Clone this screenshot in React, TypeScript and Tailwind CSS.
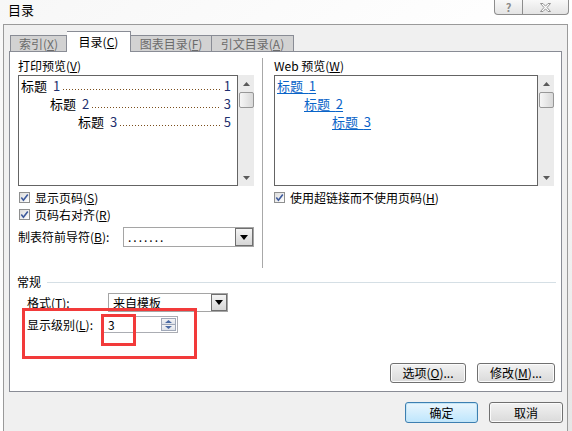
import React from "react";

const CheckBox: React.FC = () => (
  <span className="flex h-[11px] w-[11px] shrink-0 items-center justify-center border border-[#8e8f8f] bg-linear-to-br from-[#dcdcdc] to-[#ffffff]">
    <svg width="9" height="9" viewBox="0 0 9 9">
      <path d="M1.3 4.6 L3.4 7.2 L7.8 1.4" stroke="#3d5a9c" strokeWidth="1.6" fill="none" />
    </svg>
  </span>
);

const ScrollBar: React.FC = () => (
  <div className="flex w-[16px] shrink-0 flex-col items-center bg-[#ebebeb]">
    <div className="flex h-[17px] w-full items-center justify-center">
      <svg width="7" height="4" viewBox="0 0 7 4">
        <path d="M0 4 L3.5 0 L7 4Z" fill="#5a5a5a" />
      </svg>
    </div>
    <div className="h-[16px] w-[15px] rounded-[2px] border border-[#979797] bg-linear-to-r from-[#f6f6f6] to-[#d8d8d8]" />
    <div className="flex-1" />
    <div className="flex h-[17px] w-full items-center justify-center">
      <svg width="7" height="4" viewBox="0 0 7 4">
        <path d="M0 0 L3.5 4 L7 0Z" fill="#5a5a5a" />
      </svg>
    </div>
  </div>
);

const DropArrow: React.FC<{ className: string }> = ({ className }) => (
  <div
    className={`flex shrink-0 items-center justify-center border border-[#6f6f6f] bg-linear-to-b from-[#f4f4f4] to-[#d6d6d6] ${className}`}
  >
    <svg width="8" height="5" viewBox="0 0 8 5">
      <path d="M0 0 L8 0 L4 5Z" fill="#000" />
    </svg>
  </div>
);

const Button: React.FC<{ label: React.ReactNode; className: string; primary?: boolean }> = ({
  label,
  className,
  primary = false,
}) => (
  <div
    className={`flex items-center justify-center rounded-[3px] border text-[12px] leading-none ${
      primary
        ? "border-[#3c7fb1] bg-linear-to-b from-[#eaf6fd] to-[#bee6fd] shadow-[inset_0_0_0_1px_#c4e5f6]"
        : "border-[#707070] bg-linear-to-b from-[#f2f2f2] to-[#dadada] shadow-[inset_0_0_0_1px_#fbfbfb]"
    } ${className}`}
  >
    {label}
  </div>
);

const PrintRow: React.FC<{ level: number; pad: string }> = ({ level, pad }) => {
  const page = level === 1 ? "1" : level === 2 ? "3" : "5";
  return (
    <div className={`flex h-[18px] min-w-0 items-center pr-[6px] text-[13px] leading-none ${pad}`}>
      <span className="shrink-0 text-black">标题</span>
      <span className="ml-[6px] shrink-0 text-[#1e2f6e]">{level}</span>
      {/* dotted tab leader */}
      <span className="mx-[3px] mt-[9px] h-px min-w-0 flex-1 bg-[linear-gradient(to_right,#7a4e1c_1px,transparent_1px)] bg-[length:3px_1px] bg-repeat-x" />
      <span className="shrink-0 text-[#1e2f6e]">{page}</span>
    </div>
  );
};

const WebRow: React.FC<{ level: number; pad: string }> = ({ level, pad }) => (
  <div className={`flex h-[18px] items-center text-[13px] leading-none ${pad}`}>
    <span className="text-[#0a64c8] underline underline-offset-2">标题&nbsp;&nbsp;{level}</span>
  </div>
);

const Tab: React.FC<{ label: React.ReactNode; className: string; active?: boolean }> = ({
  label,
  className,
  active = false,
}) => (
  <div
    className={`flex items-center justify-center border border-b-0 border-[#898c95] text-[12px] leading-none ${
      active ? "relative z-10 -mb-px h-[21px] bg-white text-black" : "h-[16px] bg-[#d2d2d2] text-[#6b6b6b]"
    } ${className}`}
  >
    {label}
  </div>
);

export default function App() {
  return (
    <div className="relative h-[431px] w-[572px] overflow-hidden bg-linear-to-br from-[#f7f7f7] via-[#ffffff] to-[#e6e6e6] font-['Noto_Sans_CJK_SC',sans-serif] text-black">
      {/* title bar */}
      <div className="flex h-[24px] items-start justify-between">
        <div className="pl-[8px] pt-[1px] text-[13px] leading-[18px]">目录</div>
        <div className="mr-[3px] flex h-[15px]">
          <div className="flex w-[29px] items-center justify-center rounded-bl-[4px] border border-t-0 border-[#8d8d8d] bg-linear-to-b from-[#f8f8f8] to-[#e4e4e4] text-[11px] font-bold leading-none text-[#8a8a8a]">
            ?
          </div>
          <div className="flex w-[46px] items-center justify-center rounded-br-[4px] border border-t-0 border-l-0 border-[#8d8d8d] bg-linear-to-b from-[#f8f8f8] to-[#e4e4e4]">
            <svg width="11" height="9" viewBox="0 0 11 9">
              <path
                d="M0.5 0.5 L3 0.5 L5.5 3.2 L8 0.5 L10.5 0.5 L7 4.5 L10.5 8.5 L8 8.5 L5.5 5.8 L3 8.5 L0.5 8.5 L4 4.5Z"
                fill="#ffffff"
                stroke="#8a8a8a"
                strokeWidth="0.9"
              />
            </svg>
          </div>
        </div>
      </div>

      {/* client area */}
      <div className="ml-[3px] h-[407px] w-[565px] border border-b-0 border-[#9a9a9a] bg-[#f0f0f0] pl-[5px] pt-[6px]">
        {/* tabs */}
        <div className="flex h-[20px] items-end pl-px">
          <Tab label={<>索引(<u>X</u>)</>} className="w-[57px]" />
          <Tab label={<>目录(<u>C</u>)</>} className="w-[64px] border-l-0" active />
          <Tab label={<>图表目录(<u>F</u>)</>} className="w-[81px] border-l-0" />
          <Tab label={<>引文目录(<u>A</u>)</>} className="w-[82px] border-l-0" />
        </div>

        {/* tab panel */}
        <div className="flex h-[341px] w-[553px] flex-col border border-[#898c95] bg-white">
          <div className="flex h-[216px] pl-[8px] pt-[6px]">
            {/* print preview */}
            <div className="flex w-[236px] shrink-0 flex-col">
              <div className="h-[16px] text-[12px] leading-[16px]">
                打印预览(<u>V</u>)
              </div>
              <div className="mt-px flex h-[111px]">
                <div className="min-w-0 flex-1 border border-[#646464] bg-white">
                  <PrintRow level={1} pad="pl-[2px]" />
                  <PrintRow level={2} pad="pl-[31px]" />
                  <PrintRow level={3} pad="pl-[59px]" />
                </div>
                <ScrollBar />
              </div>
              <div className="mt-[3px] flex h-[17px] items-center gap-[5px] pl-px text-[12px] leading-none">
                <CheckBox />
                <span>
                  显示页码(<u>S</u>)
                </span>
              </div>
              <div className="flex h-[17px] items-center gap-[5px] pl-px text-[12px] leading-none">
                <CheckBox />
                <span>
                  页码右对齐(<u>R</u>)
                </span>
              </div>
              <div className="mt-[4px] flex h-[20px] items-center text-[12px] leading-none">
                <span className="w-[105px] shrink-0">
                  制表符前导符(<u>B</u>):
                </span>
                <div className="flex h-[20px] w-[131px] border border-[#a5a5a5] bg-white">
                  <div className="min-w-0 flex-1 pl-[4px] pt-[2px] text-[12px] leading-[14px] tracking-[2px]">.......</div>
                  <DropArrow className="w-[18px]" />
                </div>
              </div>
            </div>

            {/* separator */}
            <div className="ml-[8px] w-px shrink-0 bg-[#a8a8a8]" />

            {/* web preview */}
            <div className="ml-[11px] flex w-[280px] shrink-0 flex-col">
              <div className="h-[16px] text-[12px] leading-[16px]">
                Web 预览(<u>W</u>)
              </div>
              <div className="mt-px flex h-[111px]">
                <div className="min-w-0 flex-1 border border-[#646464] bg-white">
                  <WebRow level={1} pad="pl-[2px]" />
                  <WebRow level={2} pad="pl-[29px]" />
                  <WebRow level={3} pad="pl-[57px]" />
                </div>
                <ScrollBar />
              </div>
              <div className="mt-[3px] flex h-[17px] items-center gap-[5px] text-[12px] leading-none">
                <CheckBox />
                <span>
                  使用超链接而不使用页码(<u>H</u>)
                </span>
              </div>
            </div>
          </div>

          {/* general */}
          <div className="mt-[6px] flex h-[16px] items-center pl-[7px] pr-[5px] text-[12px] leading-none">
            <span>常规</span>
            <div className="ml-[6px] h-px flex-1 bg-[#d5dfe5]" />
          </div>
          <div className="mt-[3px] flex h-[19px] items-center pl-[17px] text-[12px] leading-none">
            <span className="w-[81px] shrink-0">
              格式(<u>T</u>):
            </span>
            <div className="flex h-[19px] w-[120px] border border-[#a5a5a5] bg-white">
              <div className="min-w-0 flex-1 pl-[4px] text-[12px] leading-[17px]">来自模板</div>
              <DropArrow className="w-[16px]" />
            </div>
          </div>
          <div className="mt-[4px] flex h-[17px] items-center pl-[17px] text-[12px] leading-none">
            <span className="w-[76px] shrink-0">
              显示级别(<u>L</u>):
            </span>
            <div className="flex h-[17px] w-[75px] border border-[#abadb3] bg-white p-px">
              <div className="flex-1 pl-[3px] text-[12px] leading-[14px]">3</div>
              <div className="flex w-[15px] flex-col">
                <div className="flex flex-1 items-center justify-center border border-[#a0a8b8] bg-linear-to-b from-[#f4f4f4] to-[#dfe3ea]">
                  <svg width="7" height="3" viewBox="0 0 7 3">
                    <path d="M0 3 L3.5 0 L7 3Z" fill="#4a6aa4" />
                  </svg>
                </div>
                <div className="flex flex-1 items-center justify-center border border-t-0 border-[#a0a8b8] bg-linear-to-b from-[#f4f4f4] to-[#dfe3ea]">
                  <svg width="7" height="3" viewBox="0 0 7 3">
                    <path d="M0 0 L3.5 3 L7 0Z" fill="#4a6aa4" />
                  </svg>
                </div>
              </div>
            </div>
          </div>
          <div className="mt-[30px] flex h-[20px] justify-end gap-[11px] pr-[6px]">
            <Button label={<>选项(<u>O</u>)...</>} className="w-[76px]" />
            <Button label={<>修改(<u>M</u>)...</>} className="w-[78px]" />
          </div>
        </div>

        {/* dialog buttons */}
        <div className="mt-[10px] flex h-[21px] justify-end gap-[11px] pr-[4px]">
          <Button label="确定" className="w-[73px]" primary />
          <Button label="取消" className="w-[74px]" />
        </div>
      </div>

      {/* red annotation boxes */}
      <div className="pointer-events-none absolute left-[22px] top-[308px] h-[51px] w-[175px] border-[3px] border-[#f23a3a]" />
      <div className="pointer-events-none absolute left-[101px] top-[314px] h-[32px] w-[35px] border-[3px] border-[#f23a3a]" />
    </div>
  );
}
